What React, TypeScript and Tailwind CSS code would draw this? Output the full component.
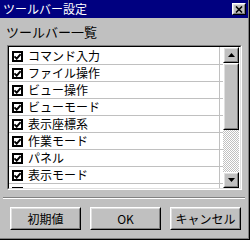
import React from "react";

const items = [
  "コマンド入力",
  "ファイル操作",
  "ビュー操作",
  "ビューモード",
  "表示座標系",
  "作業モード",
  "パネル",
  "表示モード",
  "",
];

function Check() {
  return (
    <div className="w-[11px] h-[11px] border-2 border-black bg-white flex items-center justify-center shrink-0">
      <svg width="7" height="7" viewBox="0 0 7 7" className="block">
        <path d="M0.4 3.3 L2.7 5.7 L6.6 1.2" stroke="black" strokeWidth="1.9" fill="none" />
      </svg>
    </div>
  );
}

function Raised({ className = "", children }: { className?: string; children?: React.ReactNode }) {
  return (
    <div className={"border border-t-white border-l-white border-r-black border-b-black bg-[#c0c0c0] " + className}>
      <div className="w-full h-full border border-t-[#dfdfdf] border-l-[#dfdfdf] border-r-[#808080] border-b-[#808080] flex items-center justify-center">
        {children}
      </div>
    </div>
  );
}

export default function App() {
  return (
    <div
      className="w-[250px] h-[240px] bg-[#c0c0c0] border-r border-b border-r-black border-b-black text-black"
      style={{ fontFamily: "'MS UI Gothic','Noto Sans CJK JP',sans-serif" }}
    >
      <div className="w-full h-full border-r border-b border-r-[#808080] border-b-[#808080] flex flex-col">
        {/* title bar */}
        <div className="h-[18px] bg-[#000080] flex items-center pl-[3px] pr-[2px]">
          <span className="text-white text-[12px] leading-none flex-1">ツールバー設定</span>
          <Raised className="w-[14px] h-[12px]">
            <svg width="8" height="7" viewBox="0 0 8 7">
              <path d="M1 0.5 L7 6.5 M7 0.5 L1 6.5" stroke="black" strokeWidth="1.6" />
            </svg>
          </Raised>
        </div>
        {/* label */}
        <div className="h-[27px] pl-[6px] pt-[7px] text-[13px] leading-[13px]">ツールバー一覧</div>
        {/* list box */}
        <div className="ml-[7px] w-[235px] h-[145px] border border-t-[#808080] border-l-[#808080] border-r-white border-b-white">
          <div className="w-full h-full border border-t-black border-l-black border-r-[#dfdfdf] border-b-[#dfdfdf] bg-white flex">
            <div className="w-[214px] h-full overflow-hidden relative pt-[1px]">
              <div className="absolute top-0 bottom-0 left-[210px] w-px bg-[#c0c0c0]" />
              {items.map((t, i) => (
                <div key={i} className="h-[17px] border-b border-b-[#c0c0c0] flex items-center pl-[3px] gap-[5px]">
                  <Check />
                  {t && <span className="text-[12px] leading-none">{t}</span>}
                </div>
              ))}
            </div>
            {/* scrollbar */}
            <div className="w-[16px] h-full flex flex-col">
              <Raised className="w-[16px] h-[16px] shrink-0">
                <svg width="7" height="4" viewBox="0 0 7 4">
                  <path d="M3.5 0 L7 4 L0 4 Z" fill="black" />
                </svg>
              </Raised>
              <Raised className="w-[16px] h-[67px] shrink-0" />
              <div className="flex-1 bg-[repeating-conic-gradient(#c0c0c0_0_25%,#ffffff_0_50%)] bg-[length:2px_2px]" />
              <Raised className="w-[16px] h-[16px] shrink-0">
                <svg width="7" height="4" viewBox="0 0 7 4">
                  <path d="M0 0 L7 0 L3.5 4 Z" fill="black" />
                </svg>
              </Raised>
            </div>
          </div>
        </div>
        {/* separator */}
        <div className="mt-[7px] mx-[3px] h-[2px] border-t border-t-[#808080] border-b border-b-white" />
        {/* buttons */}
        <div className="mt-[8px] pl-[10px] flex gap-[9px]">
          <Raised className="w-[71px] h-[23px]">
            <span className="text-[12px] leading-none">初期値</span>
          </Raised>
          <Raised className="w-[71px] h-[23px]">
            <span className="text-[12px] leading-none">OK</span>
          </Raised>
          <Raised className="w-[71px] h-[23px]">
            <span className="text-[12px] leading-none">キャンセル</span>
          </Raised>
        </div>
      </div>
    </div>
  );
}
